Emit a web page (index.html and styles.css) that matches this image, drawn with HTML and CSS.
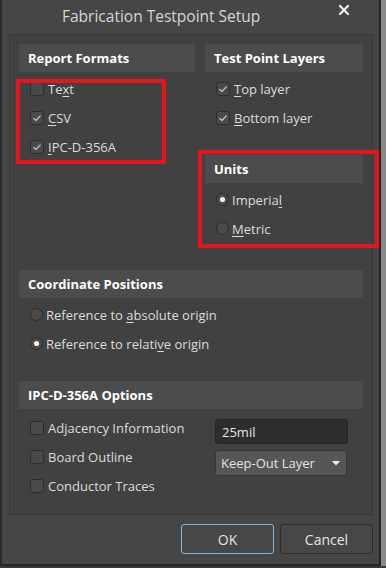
FILE: index.html
```html
<!DOCTYPE html>
<html>
<head>
<meta charset="utf-8">
<link rel="stylesheet" href="styles.css">
</head>
<body>
<div class="screen">
  <div class="dialog">
    <div class="titlebar">
      <span class="title">Fabrication Testpoint Setup</span>
      <svg class="close" width="10" height="10" viewBox="0 0 10 10"><path d="M1 1 L9 9 M9 1 L1 9" stroke="#ffffff" stroke-width="2.2" stroke-linecap="square"/></svg>
    </div>
    <div class="panel">
      <div class="top-grid">
        <section class="group">
          <div class="group-head">Report Formats</div>
          <ul class="opts">
            <li class="opt"><span class="box"></span><span>Te<u>x</u>t</span></li>
            <li class="opt"><span class="box checked"><svg viewBox="0 0 14 14" width="14" height="14"><path d="M3.5 7.2 L6 9.4 L10.5 4.6" fill="none" stroke="#cfcfcf" stroke-width="1.2"/></svg></span><span><u>C</u>SV</span></li>
            <li class="opt"><span class="box checked"><svg viewBox="0 0 14 14" width="14" height="14"><path d="M3.5 7.2 L6 9.4 L10.5 4.6" fill="none" stroke="#cfcfcf" stroke-width="1.2"/></svg></span><span><u>I</u>PC-D-356A</span></li>
          </ul>
        </section>
        <div class="right-col">
          <section class="group">
            <div class="group-head">Test Point Layers</div>
            <ul class="opts">
              <li class="opt"><span class="box checked"><svg viewBox="0 0 14 14" width="14" height="14"><path d="M3.5 7.2 L6 9.4 L10.5 4.6" fill="none" stroke="#cfcfcf" stroke-width="1.2"/></svg></span><span><u>T</u>op layer</span></li>
              <li class="opt"><span class="box checked"><svg viewBox="0 0 14 14" width="14" height="14"><path d="M3.5 7.2 L6 9.4 L10.5 4.6" fill="none" stroke="#cfcfcf" stroke-width="1.2"/></svg></span><span><u>B</u>ottom layer</span></li>
            </ul>
          </section>
          <section class="group units">
            <div class="group-head">Units</div>
            <ul class="opts">
              <li class="opt radio-opt"><span class="radio on"></span><span>Imperia<u>l</u></span></li>
              <li class="opt radio-opt"><span class="radio"></span><span><u>M</u>etric</span></li>
            </ul>
          </section>
        </div>
      </div>
      <section class="group coord">
        <div class="group-head">Coordinate Positions</div>
        <ul class="opts opts-coord">
          <li class="opt radio-opt"><span class="radio"></span><span>Reference to <u>a</u>bsolute origin</span></li>
          <li class="opt radio-opt"><span class="radio on"></span><span>Reference to relati<u>v</u>e origin</span></li>
        </ul>
      </section>
      <section class="group ipc">
        <div class="group-head">IPC-D-356A Options</div>
        <div class="ipc-grid">
          <div class="opt"><span class="box"></span><span>Adjacency Information</span></div>
          <div class="field">25mil</div>
          <div class="opt"><span class="box"></span><span>Board Outline</span></div>
          <div class="select"><span>Keep-Out Layer</span><svg width="8" height="5" viewBox="0 0 8 5"><path d="M0 0 L8 0 L4 4.5 Z" fill="#f0f0f0"/></svg></div>
          <div class="opt"><span class="box"></span><span>Conductor Traces</span></div>
        </div>
      </section>
    </div>
    <div class="footer">
      <button class="btn ok">OK</button>
      <button class="btn">Cancel</button>
    </div>
    <div class="mark mark-left"></div>
    <div class="mark mark-right"></div>
  </div>
  <div class="side"></div>
</div>
</body>
</html>
```
FILE: styles.css
```css
* { box-sizing: border-box; }
html, body { margin: 0; padding: 0; }
body {
  background: #3b3b3b;
  font-family: "Open Sans", "Noto Sans", sans-serif;
  font-size: 13px;
  color: #dcdcdc;
  width: 386px;
  height: 568px;
  overflow: hidden;
}
.screen { display: flex; align-items: flex-start; }
.dialog {
  position: relative;
  width: 381px;
  height: 566px;
  background: #464646;
  border-left: 2px solid #2a2a2a;
  border-right: 2px solid #262626;
  border-bottom: 2px solid #262626;
  padding: 0 6px 10px 7px;
}
.side { width: 5px; height: 566px; background: #8a8888; }
.titlebar {
  height: 34px;
  display: flex;
  align-items: center;
  position: relative;
}
.title {
  margin-left: 53px;
  font-size: 15.5px;
  color: #d6d6d6;
  margin-top: -3px;
}
.close { margin-left: auto; margin-right: 24px; margin-top: -14px; }
.panel {
  background: #414141;
  border: 1px solid #383838;
  padding: 9px 9px 13px 9px;
  height: 481px;
}
.top-grid {
  display: grid;
  grid-template-columns: 176px 1fr;
  column-gap: 10px;
}
.group-head {
  height: 28px;
  background: #4c4c4c;
  color: #ffffff;
  font-weight: 700;
  font-size: 13px;
  display: flex;
  align-items: center;
  padding-left: 9px;
}
.opts { list-style: none; margin: 2px 0 0; padding: 0; }
.opt {
  height: 29px;
  display: flex;
  align-items: center;
  padding-left: 11px;
  gap: 4px;
}
.radio-opt { gap: 3px; }
.box {
  width: 14px;
  height: 14px;
  border: 1px solid #2c2c2c;
  border-radius: 3px;
  background: #4a4a4a;
  flex: none;
  position: relative;
}
.box svg { position: absolute; left: -1px; top: -1px; }
.radio {
  width: 13px;
  height: 13px;
  border-radius: 50%;
  border: 1px solid #2c2c2c;
  background: #4a4a4a;
  flex: none;
  position: relative;
}
.radio.on::after {
  content: "";
  position: absolute;
  left: 3px; top: 3px;
  width: 5px; height: 5px;
  border-radius: 50%;
  background: #ffffff;
}
u { text-decoration-thickness: 1px; text-underline-offset: 2px; }
.units { margin-top: 23px; }
.coord { margin-top: 27px; }
.opts-coord { margin-top: 2px; }
.ipc { margin-top: 23px; }
.ipc-grid {
  display: grid;
  grid-template-columns: 186px 133px;
  grid-auto-rows: 29px;
  column-gap: 10px;
  margin-top: 4px;
}
.field {
  height: 25px;
  margin-top: 6px;
  background: #2d2d2d;
  border: 1px solid #262626;
  border-radius: 3px;
  display: flex;
  align-items: center;
  padding-left: 6px;
  color: #e4e4e4;
}
.select {
  height: 26px;
  margin-top: 8px;
  width: 132px;
  background: #565656;
  border: 1px solid #363636;
  border-radius: 3px;
  display: flex;
  align-items: center;
  justify-content: space-between;
  padding: 0 6px 0 5px;
  color: #e4e4e4;
}
.footer {
  display: flex;
  justify-content: flex-end;
  gap: 6px;
  padding-top: 9px;
}
.btn {
  width: 93px;
  height: 30px;
  background: #474747;
  border: 1px solid #2c2c2c;
  border-radius: 3px;
  color: #e6e6e6;
  font-family: "Open Sans", "Noto Sans", sans-serif;
  font-size: 14px;
  padding: 0;
}
.btn.ok { border-color: #86b4df; }
.mark {
  position: absolute;
  border: 4px solid #e8141c;
  pointer-events: none;
}
.mark-left { left: 14px; top: 79px; width: 150px; height: 85px; }
.mark-right { left: 196px; top: 150px; width: 181px; height: 98px; }
```
